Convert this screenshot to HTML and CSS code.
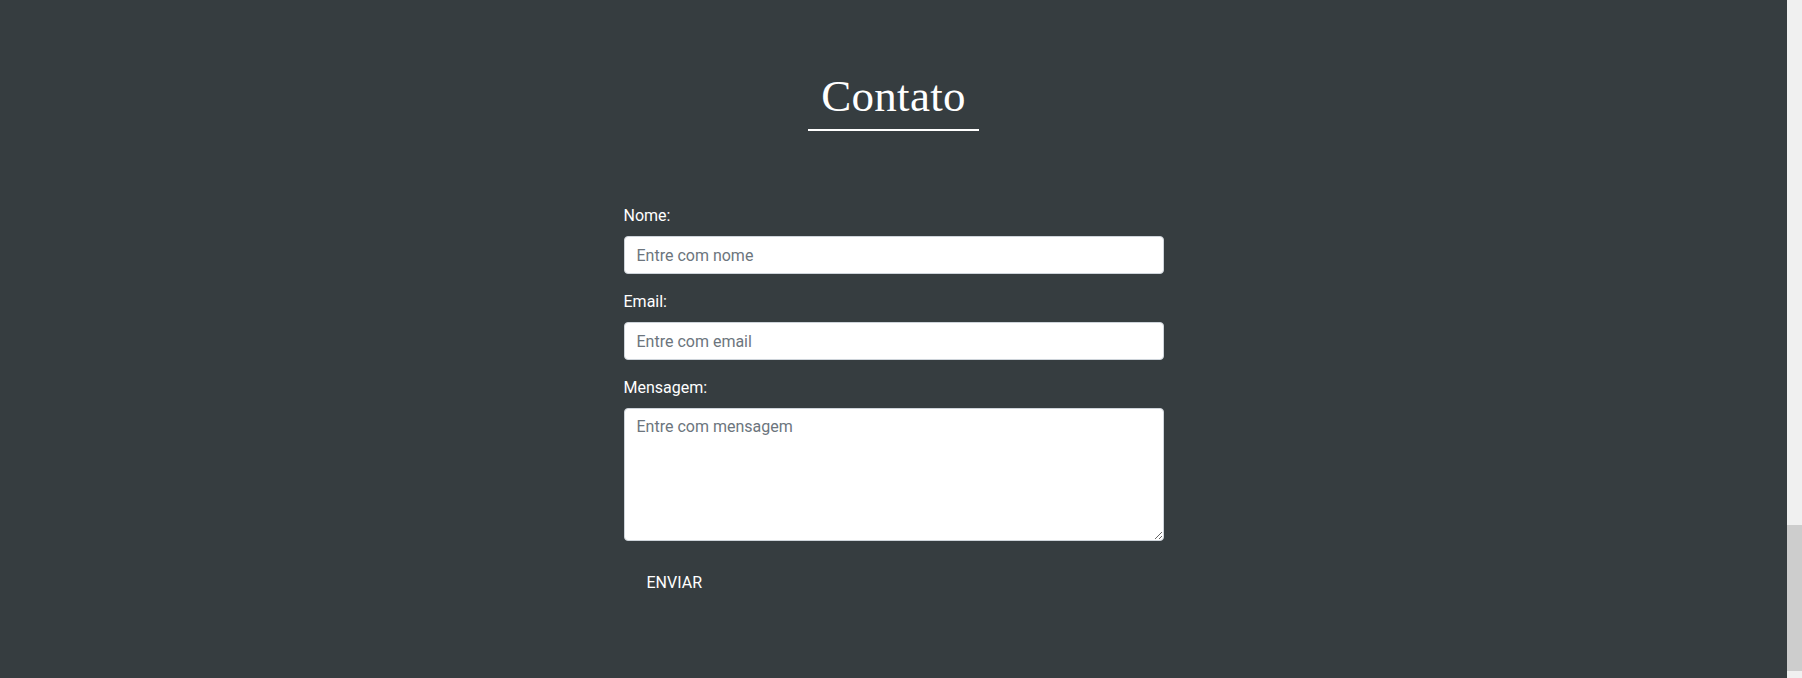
FILE: index.html
```html
<!DOCTYPE html>
<html lang="pt">
<head>
<meta charset="utf-8">
<title>Contato</title>
<link rel="stylesheet" href="styles.css">
</head>
<body>
<div class="page">
  <section class="contact">
    <h2 class="contact-title">Contato</h2>
    <form class="contact-form">
      <div class="form-group">
        <label class="form-label" for="nome">Nome:</label>
        <input class="form-control" id="nome" type="text" placeholder="Entre com nome">
      </div>
      <div class="form-group">
        <label class="form-label" for="email">Email:</label>
        <input class="form-control" id="email" type="email" placeholder="Entre com email">
      </div>
      <div class="form-group">
        <label class="form-label" for="msg">Mensagem:</label>
        <textarea class="form-control form-textarea" id="msg" rows="5" placeholder="Entre com mensagem"></textarea>
      </div>
      <button class="btn-send" type="button">ENVIAR</button>
    </form>
  </section>
  <div class="scrollbar">
    <div class="scroll-track-top"></div>
    <div class="scroll-thumb"></div>
    <div class="scroll-track-bottom"></div>
  </div>
</div>
</body>
</html>
```

FILE: styles.css
```css
html, body {
  margin: 0;
  padding: 0;
  height: 678px;
  overflow: hidden;
}

body {
  font-family: Roboto, "Liberation Sans", Arial, sans-serif;
  background: #363d40;
}

.page {
  display: flex;
  height: 678px;
}

.contact {
  flex: 1;
  background: #363d40;
  display: flex;
  flex-direction: column;
  align-items: center;
  padding-top: 69px;
  box-sizing: border-box;
}

.contact-title {
  margin: 0;
  width: 171px;
  text-align: center;
  font-family: "Liberation Serif", "Times New Roman", serif;
  font-weight: 400;
  font-size: 45px;
  line-height: 1.2;
  color: #ffffff;
  padding-bottom: 6px;
  border-bottom: 2px solid #ffffff;
  letter-spacing: 0.3px;
}

.contact-form {
  width: 540px;
  margin-top: 73px;
}

.form-group {
  margin-bottom: 16px;
}

.form-label {
  display: block;
  color: #ffffff;
  font-size: 16px;
  line-height: 24px;
  margin-bottom: 8px;
}

.form-control {
  display: block;
  width: 100%;
  box-sizing: border-box;
  height: 38px;
  padding: 6px 12px;
  font-family: Roboto, "Liberation Sans", Arial, sans-serif;
  font-size: 16px;
  line-height: 24px;
  color: #495057;
  background: #ffffff;
  border: 1px solid #ced4da;
  border-radius: 4px;
  margin: 0;
  outline: none;
}

.form-control::placeholder {
  color: #6c757d;
  opacity: 1;
}

.form-textarea {
  height: 133px;
  resize: vertical;
}

.btn-send {
  display: block;
  background: transparent;
  border: none;
  color: #ffffff;
  font-family: Roboto, "Liberation Sans", Arial, sans-serif;
  font-size: 16px;
  line-height: 24px;
  padding: 14px 24px 12px 23px;
  margin: 0;
  cursor: pointer;
}

.scrollbar {
  width: 15px;
  display: flex;
  flex-direction: column;
  background: #f0f0f0;
}

.scroll-track-top {
  height: 525px;
}

.scroll-thumb {
  height: 146px;
  background: #cdcdcd;
}

.scroll-track-bottom {
  flex: 1;
}
```
